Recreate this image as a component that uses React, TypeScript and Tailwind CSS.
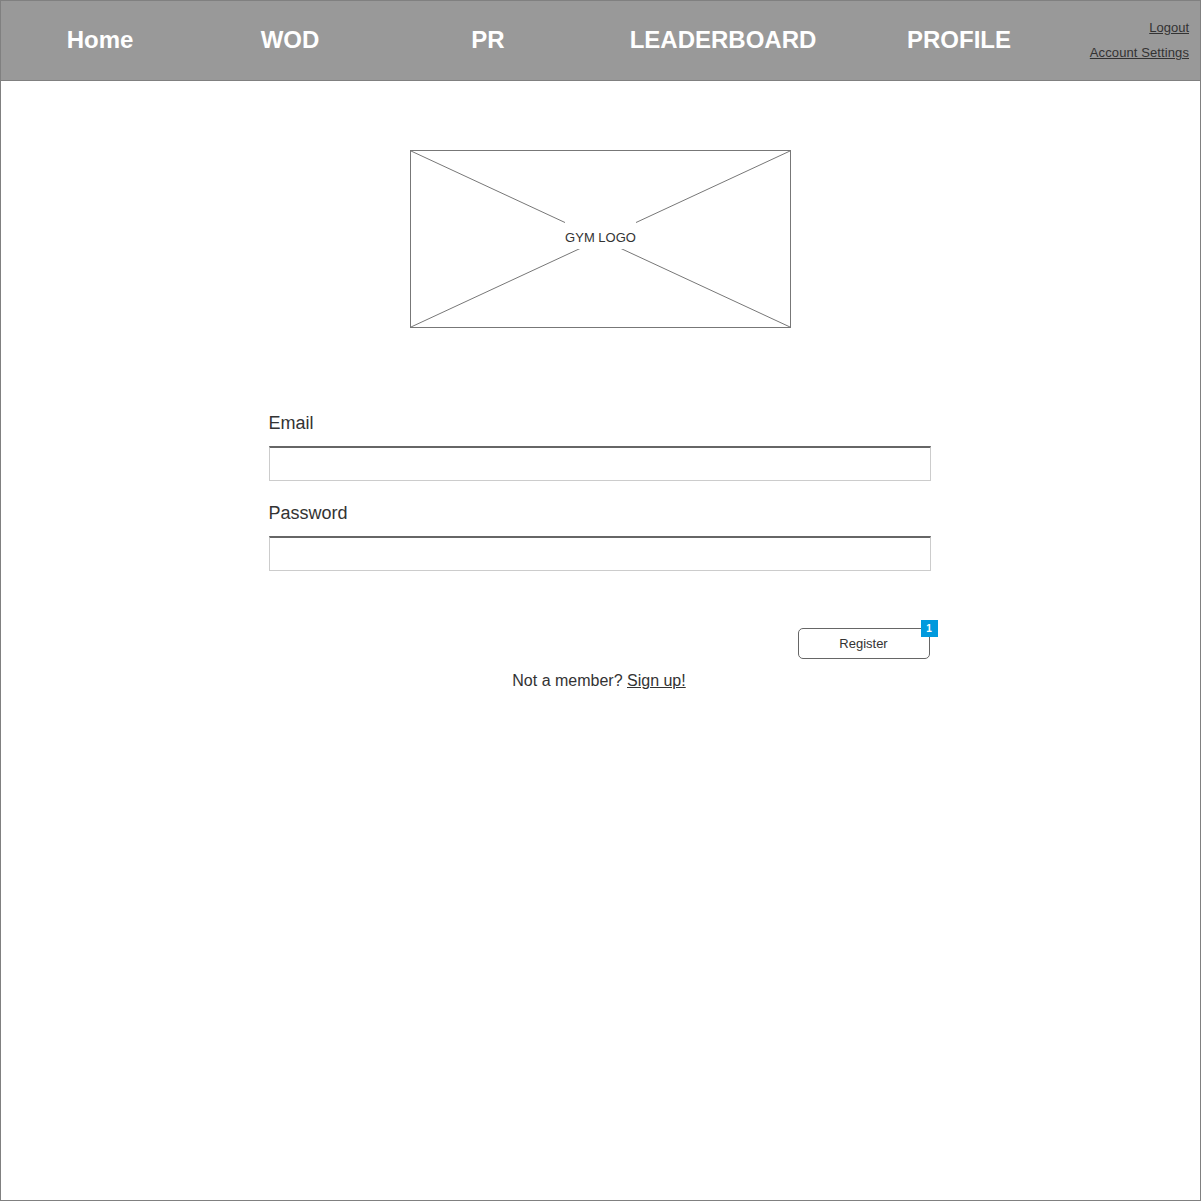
import React from "react"

const navItems = [
  { label: "Home", w: "w-[198px]" },
  { label: "WOD", w: "w-[182px]" },
  { label: "PR", w: "w-[214px]" },
  { label: "LEADERBOARD", w: "w-[256px]" },
  { label: "PROFILE", w: "w-[216px]" },
]

function LogoPlaceholder() {
  return (
    <div className="relative w-[381px] h-[178px] border border-[#777]">
      <svg className="absolute inset-0" width="379" height="176" viewBox="0 0 379 176">
        <line x1="0" y1="0" x2="379" y2="176" stroke="#777" strokeWidth="1" />
        <line x1="379" y1="0" x2="0" y2="176" stroke="#777" strokeWidth="1" />
      </svg>
      <div className="absolute inset-0 flex items-center justify-center">
        <span className="mb-[7px] text-[13px] text-[#333] bg-white pt-[8px] pb-[3px] leading-[16px]">GYM LOGO</span>
      </div>
    </div>
  )
}

function Field({ label }: { label: string }) {
  return (
    <div className="flex flex-col">
      <label className="text-[18px] leading-[22px] text-[#333]">{label}</label>
      <div className="mt-[12px] h-[35px] w-[662px] border border-[#ccc] border-t-2 border-t-[#666] bg-white" />
    </div>
  )
}

export default function App() {
  return (
    <div
      className="w-[1201px] h-[1201px] border border-[#808080] bg-white flex flex-col"
      style={{ fontFamily: '"Liberation Sans", Arial, sans-serif' }}
    >
      <header className="h-[80px] bg-[#999] border-b border-[#808080] flex items-center pb-[2px] shrink-0">
        {navItems.map((item) => (
          <div key={item.label} className={`${item.w} text-center text-white font-bold text-[24px] leading-[28px]`}>
            {item.label}
          </div>
        ))}
        <div className="flex-1 flex flex-col items-end pr-[11px] gap-[7px] pt-[2px] text-[13px] leading-[18px] text-[#333]">
          <a className="underline">Logout</a>
          <a className="underline tracking-[0.1px]">Account Settings</a>
        </div>
      </header>

      <main className="flex flex-col items-center">
        <div className="mt-[69px]">
          <LogoPlaceholder />
        </div>

        <div className="mt-[84px] mr-[2px] flex flex-col gap-[21px]">
          <Field label="Email" />
          <Field label="Password" />
        </div>

        <div className="w-[662px] mr-[2px] flex justify-end mt-[57px]">
          <div className="relative mr-[1px]">
            <button className="w-[132px] h-[31px] border border-[#666] rounded-[5px] text-[13px] text-[#333] bg-white">
              Register
            </button>
            <span className="absolute -top-[8px] -right-[8px] w-[17px] h-[17px] bg-[#0099dd] text-white text-[10px] font-bold flex items-center justify-center leading-none">
              1
            </span>
          </div>
        </div>

        <p className="mt-[12px] mr-[3px] text-[16px] leading-[20px] text-[#333]">
          Not a member? <a className="underline">Sign up!</a>
        </p>
      </main>
    </div>
  )
}
